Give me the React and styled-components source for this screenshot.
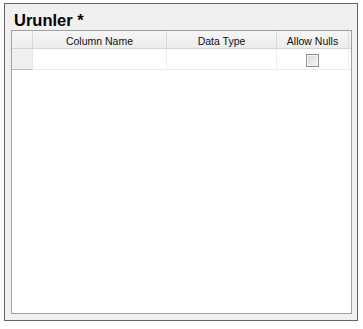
import React from "react";
import styled, { createGlobalStyle } from "styled-components";

const Global = createGlobalStyle`
  html, body { margin: 0; padding: 0; background: #ffffff; }
  body { font-family: "Liberation Sans", Arial, sans-serif; }
`;

const Panel = styled.div`
  box-sizing: border-box;
  margin: 3px 0 0 4px;
  width: 354px;
  height: 318px;
  border: 1px solid #646464;
  background: #f0f0f0;
  padding: 0 5px 6px 6px;
  display: flex;
  flex-direction: column;
`;

const Title = styled.div`
  box-sizing: border-box;
  height: 26px;
  padding: 6px 0 0 3px;
  font-family: "Liberation Sans", Arial, sans-serif;
  font-weight: bold;
  font-size: 16.5px;
  line-height: 20px;
  color: #050505;
`;

const Grid = styled.div`
  flex: 1;
  border: 1px solid #a0a0a0;
  background: #ffffff;
  display: grid;
  grid-template-columns: 21px 134px 110px 72px 1fr;
  grid-template-rows: 18px 21px 1fr;
  align-content: start;
`;

const HeaderCell = styled.div`
  box-sizing: border-box;
  height: 18px;
  border-right: ${(p) => (p.$last ? "none" : "1px solid #dadada")};
  border-bottom: 1px solid #d5d5d5;
  background: linear-gradient(#f6f6f6, #ededed);
  padding-top: 2px;
  line-height: 16px;
  font-size: 10.5px;
  color: #101010;
  text-align: center;
  white-space: nowrap;
  overflow: hidden;
`;

const RowHeader = styled.div`
  box-sizing: border-box;
  height: 21px;
  border-right: 1px solid #e6e6e6;
  background: #f0f0f0;
  border-bottom: 1px solid #b9b9b9;
`;

const Cell = styled.div`
  box-sizing: border-box;
  height: 21px;
  border-right: ${(p) => (p.$last ? "none" : "1px solid #ececec")};
  border-bottom: 1px solid #ececec;
  display: flex;
  justify-content: center;
  padding-top: 5px;
`;

const Check = styled.span`
  box-sizing: border-box;
  display: block;
  width: 13px;
  height: 13px;
  border: 1px solid #8e8f8f;
  box-shadow: inset 0 0 0 1px #f6f6f6;
  background: linear-gradient(135deg, #d2d4d6 0%, #e9eaeb 55%, #f8f8f8 100%);
`;

export default function App() {
  return (
    <>
      <Global />
      <Panel>
        <Title>Urunler *</Title>
        <Grid>
          <HeaderCell />
          <HeaderCell>Column Name</HeaderCell>
          <HeaderCell>Data Type</HeaderCell>
          <HeaderCell>Allow Nulls</HeaderCell>
          <HeaderCell $last />
          <RowHeader />
          <Cell />
          <Cell />
          <Cell>
            <Check />
          </Cell>
          <Cell $last />
        </Grid>
      </Panel>
    </>
  );
}
